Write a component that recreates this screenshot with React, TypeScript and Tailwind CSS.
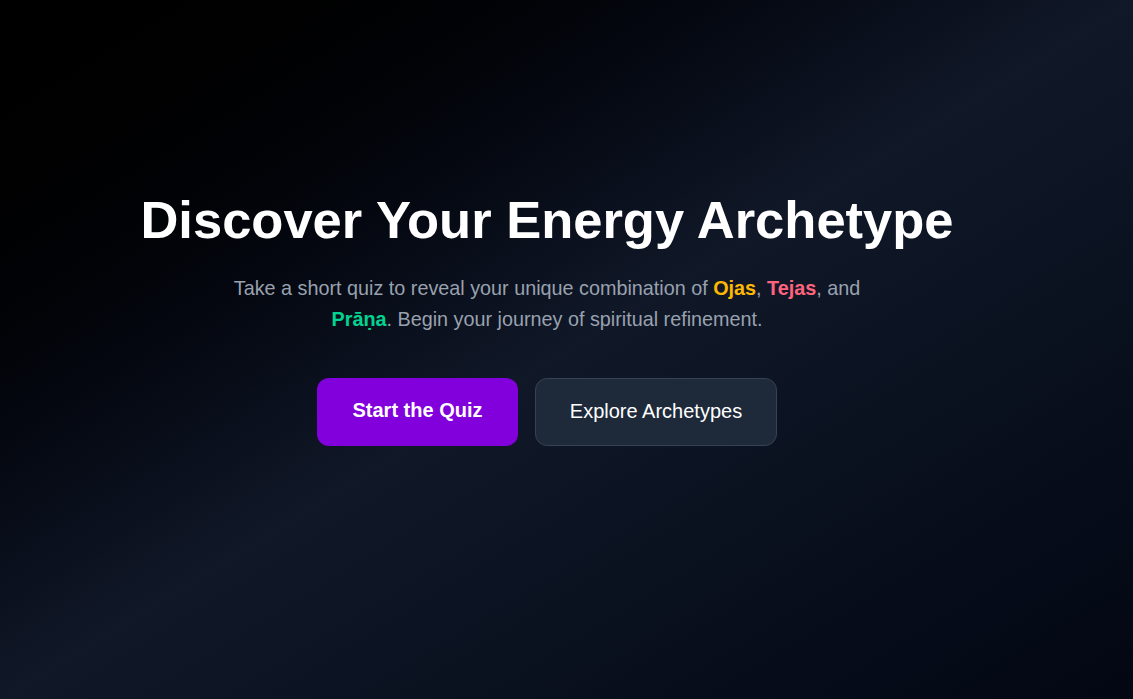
export default function App() {
  return (
    <div
      className="min-h-screen w-full bg-gradient-to-br from-black via-gray-900 to-gray-950 text-white"
      style={{ fontFamily: '"Liberation Sans", Arial, sans-serif' }}
    >
      <div className="flex min-h-screen flex-col items-center pr-[39px] pt-[186px] text-center">
        <h1 className="text-[52.5px] font-bold leading-[68px] tracking-normal">
          Discover Your Energy Archetype
        </h1>
        <p className="mt-[19px] max-w-2xl text-[19.8px] leading-[31px] text-gray-400">
          Take a short quiz to reveal your unique combination of{" "}
          <span className="font-bold text-amber-400">Ojas</span>,{" "}
          <span className="font-bold text-rose-400">Tejas</span>, and{" "}
          <span className="font-bold text-emerald-400">Prāṇa</span>. Begin your
          journey of spiritual refinement.
        </p>
        <div className="mt-[43px] flex gap-[17px]">
          <button className="h-[68px] w-[201px] rounded-xl bg-purple-700 pb-[4px] text-xl font-bold text-white">
            Start the Quiz
          </button>
          <button className="h-[68px] w-[242px] rounded-xl border border-gray-700 bg-gray-800 pb-[2px] text-xl text-white">
            Explore Archetypes
          </button>
        </div>
      </div>
    </div>
  );
}
